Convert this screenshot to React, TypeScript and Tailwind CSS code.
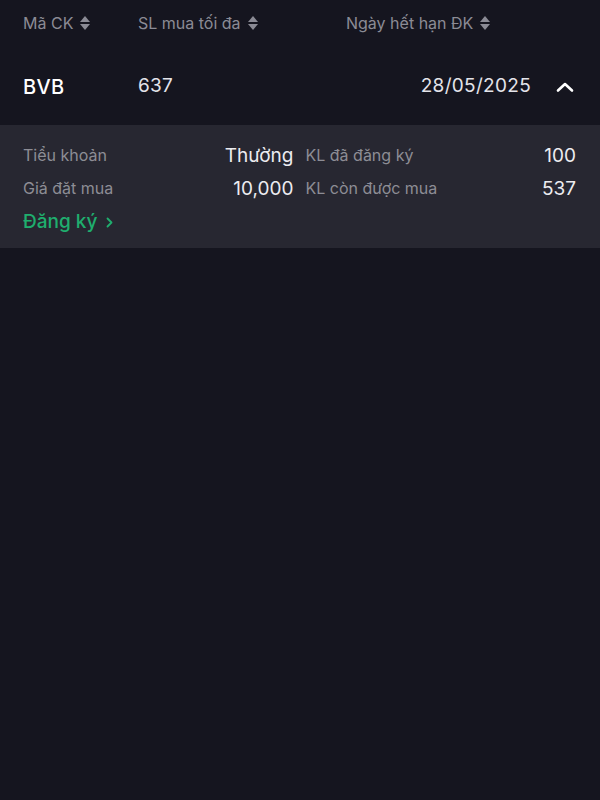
import React from "react";

function SortIcon() {
  return (
    <svg width="10" height="16" viewBox="0 0 10 16" className="ml-[7px] inline-block" fill="#8b8b95">
      <path d="M5 1 L10 7 H0 Z" />
      <path d="M5 15 L10 9 H0 Z" />
    </svg>
  );
}

function Field({ label, value }: { label: string; value: string }) {
  return (
    <div className="flex items-center justify-between h-[33px]">
      <span className="text-[16px] text-[#8d8d95]">{label}</span>
      <span className="text-[19px] text-[#ececf0] pt-[3px]">{value}</span>
    </div>
  );
}

export default function App() {
  return (
    <div
      className="w-[600px] h-[800px] bg-[#15151f] text-white"
      style={{ fontFamily: "Inter, 'Noto Sans', sans-serif" }}
    >
      {/* header */}
      <div className="flex items-center h-[46px] pl-[23px] text-[16px] text-[#8b8b95]">
        <div className="w-[115px] flex items-center">Mã CK<SortIcon /></div>
        <div className="w-[208px] flex items-center">SL mua tối đa<SortIcon /></div>
        <div className="flex items-center">Ngày hết hạn ĐK<SortIcon /></div>
      </div>

      {/* row */}
      <div className="flex items-center h-[79px] pl-[23px] pr-[26px] pt-[2px]">
        <div className="w-[115px] text-[20px] font-medium text-white tracking-[0.4px]">BVB</div>
        <div className="text-[19px] text-[#e4e4ea] tracking-[0.3px]">637</div>
        <div className="ml-auto text-[19px] text-[#e4e4ea] tracking-[0.3px]">28/05/2025</div>
        <svg width="18" height="12" viewBox="0 0 18 12" className="ml-[25px]" fill="none" stroke="#ffffff" strokeWidth="2.6" strokeLinecap="round" strokeLinejoin="round">
          <path d="M2 9.5 L9 3 L16 9.5" />
        </svg>
      </div>

      {/* expanded panel */}
      <div className="bg-[#272731] h-[123px] px-[23px] pt-[13px] pr-[24px]">
        <div className="grid grid-cols-2 gap-x-[12px]">
          <div>
            <Field label="Tiểu khoản" value="Thường" />
            <Field label="Giá đặt mua" value="10,000" />
          </div>
          <div>
            <Field label="KL đã đăng ký" value="100" />
            <Field label="KL còn được mua" value="537" />
          </div>
        </div>
        <div className="flex items-center gap-[9px] mt-[4px] text-[19px] font-medium text-[#1fae6e]">
          Đăng ký
          <svg width="7" height="11" viewBox="0 0 7 11" fill="none" stroke="#1fae6e" strokeWidth="1.8" strokeLinecap="round" strokeLinejoin="round">
            <path d="M1.5 1.5 L5.5 5.5 L1.5 9.5" />
          </svg>
        </div>
      </div>
    </div>
  );
}
